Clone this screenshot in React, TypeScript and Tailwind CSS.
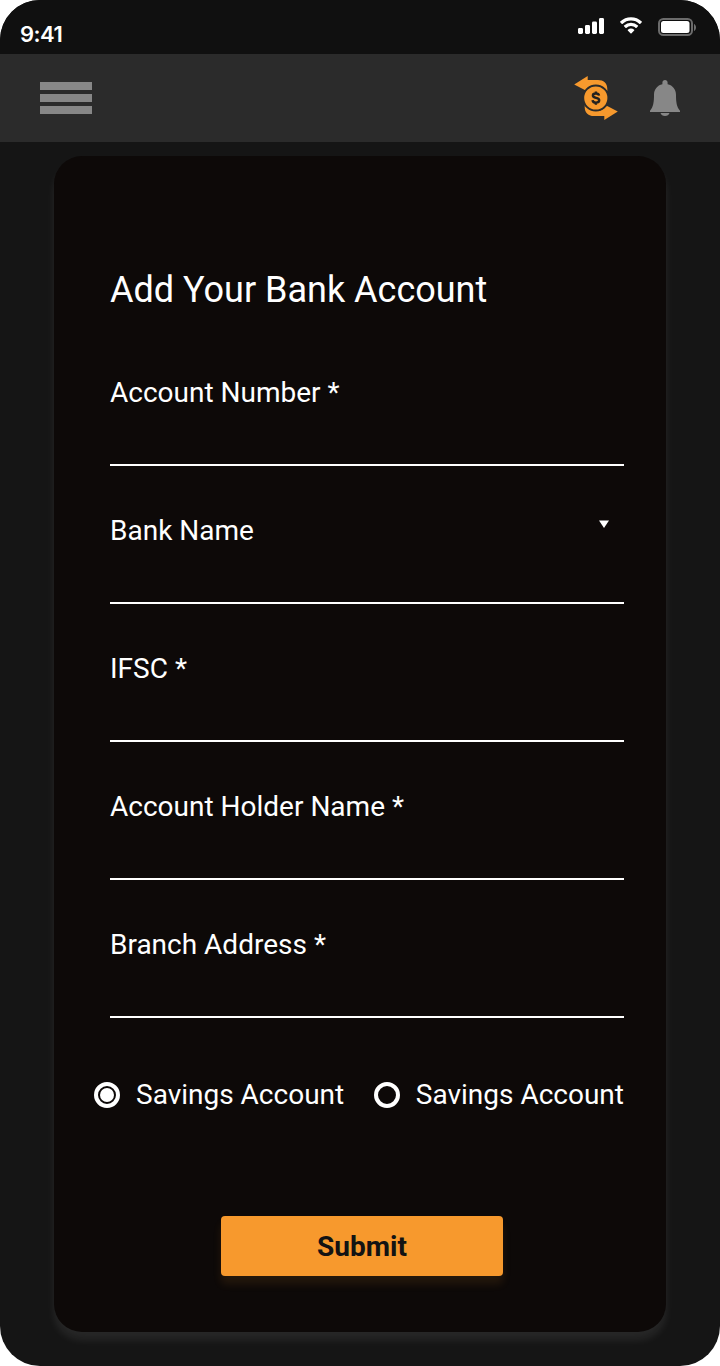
import React from "react";

function StatusBar() {
  return (
    <div className="flex h-[54px] justify-between bg-[#101010] pl-5 pr-6">
      <span className="pt-[21px] font-['Inter',sans-serif] text-[22px] font-semibold leading-[27px] tracking-[-0.5px]">9:41</span>
      <svg className="h-[54px] w-[120px]" viewBox="576 0 120 54" fill="none">
        <g fill="#fff">
          <rect x="578" y="28" width="5" height="6" rx="1.4" />
          <rect x="585" y="25" width="5" height="9" rx="1.4" />
          <rect x="592" y="21.5" width="5" height="12.5" rx="1.4" />
          <rect x="599" y="18" width="5" height="16" rx="1.4" />
          <path d="M631 20.5c3.2 0 6.2 1.2 8.5 3.4.2.2.4.2.6 0l1.7-1.7c.2-.2.2-.5 0-.7a15.7 15.7 0 0 0-21.6 0c-.2.2-.2.5 0 .7l1.7 1.7c.2.2.4.2.6 0A12.4 12.4 0 0 1 631 20.5Z" />
          <path d="M631 26.1c1.7 0 3.4.7 4.7 1.8.2.2.4.2.6 0l1.7-1.7c.2-.2.2-.5 0-.7a10.2 10.2 0 0 0-14 0c-.2.2-.2.5 0 .7l1.7 1.7c.2.2.4.2.6 0a7 7 0 0 1 4.7-1.8Z" />
          <path d="M634.2 30.5c.2-.2.2-.5 0-.7a5.1 5.1 0 0 0-6.4 0c-.2.2-.2.5 0 .7l2.9 2.9c.2.2.4.2.6 0Z" />
          <rect x="661" y="21" width="28.5" height="12" rx="2.5" />
          <path d="M694 24v7c1.300-.6 2-2 2-3.500s-.7-2.900-2-3.500Z" opacity=".4" />
        </g>
        <rect x="659" y="19" width="33" height="16" rx="4.3" stroke="#6b6b6b" strokeWidth="2" />
      </svg>
    </div>
  );
}

function ExchangeIcon() {
  return (
    <svg className="h-11 w-11" viewBox="574 76 44 44" fill="#f7992d">
      <path d="M574.200 84.500 587.700 76v4H598c5.500 0 9.300 3.200 9.300 8.800v2.500A13.700 13.700 0 0 0 587.700 87.500v4Z" />
      <path d="M617.800 111.500 604.300 120v-4H594c-5.500 0-9.300-3.200-9.300-8.800v-2.500A13.700 13.700 0 0 0 604.300 108.500v-4Z" />
      <circle cx="595.800" cy="98" r="12.600" stroke="#2b2b2b" strokeWidth="2" />
      <path d="M599 95.700c-.2-1.500-1.400-2.200-3.100-2.200-1.800 0-3 .8-3 2.100 0 3.200 6.300 1.500 6.300 4.700 0 1.500-1.300 2.300-3.200 2.300-2 0-3.300-.8-3.400-2.500M595.900 91.500v3M595.900 102v2.700" fill="none" stroke="#24221f" strokeWidth="2.400" />
    </svg>
  );
}

function BellIcon() {
  return (
    <svg className="h-9 w-[30px]" viewBox="650 80 30 36" fill="#878787">
      <path d="M665 80c1.500 0 2.600 1.100 2.600 2.600v1.700c5.200 1.100 8.400 5.200 8.400 10.500 0 7.500.7 12.200 4 16v1.200H650v-1.200c3.300-3.800 4-8.500 4-16 0-5.300 3.200-9.400 8.400-10.500v-1.700c0-1.500 1.100-2.600 2.600-2.600Z" />
      <path d="M660.500 113h9c-.5 1.900-2.300 3-4.500 3s-4-1.100-4.500-3Z" />
    </svg>
  );
}

function NavBar() {
  return (
    <header className="flex h-[88px] items-center justify-between bg-[#2b2b2b] px-10">
      <div className="flex w-[52px] flex-col gap-1">
        <div className="h-2 bg-[#878787]" />
        <div className="h-2 bg-[#878787]" />
        <div className="h-2 bg-[#878787]" />
      </div>
      <div className="flex items-center gap-8">
        <ExchangeIcon />
        <BellIcon />
      </div>
    </header>
  );
}

function Field({ label, select = false }: { label: string; select?: boolean }) {
  return (
    <div className="flex h-[90px] items-start justify-between border-b-2 border-white">
      <span className="text-[28px] leading-[33px]">{label}</span>
      {select && (
        <svg className="mr-[15px] mt-1.5 h-2 w-[10px]" viewBox="0 0 10 8" fill="#fff">
          <path d="M0 .4h10L5 8Z" />
        </svg>
      )}
    </div>
  );
}

function Radio({ label, checked = false }: { label: string; checked?: boolean }) {
  return (
    <div className="flex items-center gap-4">
      <svg className="h-[26px] w-[26px]" viewBox="0 0 26 26">
        <circle cx="13" cy="13" r="11" fill="none" stroke="#fff" strokeWidth="4" />
        {checked && <circle cx="13" cy="13" r="7" fill="#fff" />}
      </svg>
      <span className="whitespace-nowrap text-[28px] leading-[33px]">{label}</span>
    </div>
  );
}

export default function App() {
  return (
    <div className="h-[1366px] w-[720px] bg-white">
      <div className="flex h-full flex-col overflow-hidden rounded-[40px] bg-[#151515] font-['Roboto',sans-serif] text-white">
        <StatusBar />
        <NavBar />
        <main className="mx-[54px] mt-[14px] flex h-[1176px] flex-col rounded-[28px] bg-[#0d0908] pl-14 pr-[42px] pt-[113px] shadow-[0_8px_8px_rgba(255,255,255,0.08)]">
          <h1 className="text-[36px] leading-[42px]">Add Your Bank Account</h1>
          <div className="mt-[65px] flex flex-col gap-12">
            <Field label="Account Number *" />
            <Field label="Bank Name" select />
            <Field label="IFSC *" />
            <Field label="Account Holder Name *" />
            <Field label="Branch Address *" />
          </div>
          <div className="-ml-4 mt-[60px] flex justify-between">
            <Radio label="Savings Account" checked />
            <Radio label="Savings Account" />
          </div>
          <button className="ml-[111px] mt-[105px] h-[60px] w-[282px] rounded-[4px] bg-[#f7992d] text-[28px] font-bold leading-[33px] text-[#131313] shadow-[0_8px_8px_rgba(247,153,45,0.1)]">
            Submit
          </button>
        </main>
      </div>
    </div>
  );
}
